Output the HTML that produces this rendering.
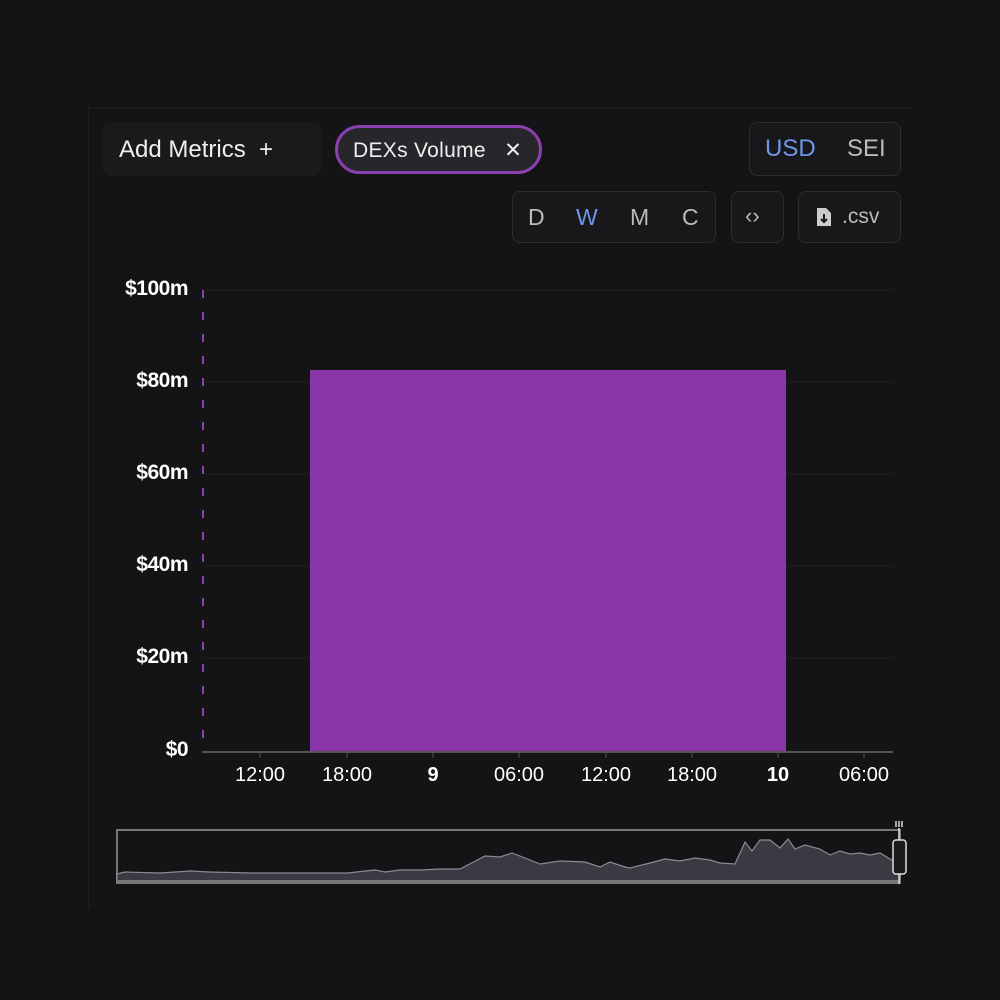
<!DOCTYPE html>
<html><head><style>
body{margin:0;width:1000px;height:1000px;background:#131316;font-family:"Liberation Sans",sans-serif;position:relative;overflow:hidden;color:#e8e8ea}
.panel{position:absolute;left:88px;top:107px;width:822px;height:800px;background:#141417;border-top:1px solid #1f1f23;border-left:1px solid #1f1f23}
.b{position:absolute;box-sizing:border-box}
.box{border:1px solid #2c2c31;border-radius:8px;background:#18181b}
.t{position:absolute;white-space:nowrap}
.yl{position:absolute;font-size:21px;font-weight:bold;color:#fff;text-align:right;letter-spacing:-0.5px}
.xl{position:absolute;top:764px;font-size:20px;color:#fff;transform:translateX(-50%)}
</style></head><body>
<div class="panel"></div>
<div class="b" style="left:102px;top:122px;width:220px;height:54px;background:#1a1a1d;border-radius:10px"></div>
<div class="t" style="left:119px;top:136px;font-size:24px;color:#eee">Add Metrics&nbsp;&nbsp;+</div>
<div class="b" style="left:335px;top:125px;width:207px;height:49px;border:3px solid #8b3fb0;border-radius:25px;background:#27272b"></div>
<div class="t" style="left:353px;top:138px;font-size:21px;color:#eee;letter-spacing:0.3px">DEXs Volume&nbsp;&nbsp;&nbsp;✕</div>
<div class="b box" style="left:749px;top:122px;width:152px;height:54px"></div>
<div class="t" style="left:765px;top:135px;font-size:24px;color:#6e97ea">USD</div>
<div class="t" style="left:847px;top:135px;font-size:24px;color:#bbb">SEI</div>
<div class="b box" style="left:512px;top:191px;width:204px;height:52px"></div>
<div class="t" style="left:528px;top:204px;font-size:23px;color:#bbb">D</div>
<div class="t" style="left:576px;top:204px;font-size:23px;color:#6e97ea">W</div>
<div class="t" style="left:630px;top:204px;font-size:23px;color:#bbb">M</div>
<div class="t" style="left:682px;top:204px;font-size:23px;color:#bbb">C</div>
<div class="b box" style="left:731px;top:191px;width:53px;height:52px"></div>
<div class="t" style="left:745px;top:203px;font-size:22px;color:#bbb">‹›</div>
<div class="b box" style="left:798px;top:191px;width:103px;height:52px"></div>
<svg class="b" style="left:815px;top:206px" width="18" height="22" viewBox="0 0 18 22"><path d="M2 2h9l5 5v13H2z" fill="#ccc"/><path d="M9 8v8M6 13l3 3 3-3" stroke="#18181b" stroke-width="2" fill="none"/></svg>
<div class="t" style="left:842px;top:205px;font-size:21px;color:#bbb">.csv</div>
<svg class="b" style="left:0;top:0" width="1000" height="1000">
<g stroke="#1f1f23" stroke-width="1">
<line x1="202" y1="290" x2="893" y2="290"/><line x1="202" y1="382" x2="893" y2="382"/><line x1="202" y1="474" x2="893" y2="474"/><line x1="202" y1="566" x2="893" y2="566"/><line x1="202" y1="658" x2="893" y2="658"/></g>
<line x1="203" y1="290" x2="203" y2="750" stroke="#8b3fb0" stroke-width="2" stroke-dasharray="8,14"/>
<rect x="310" y="370" width="476" height="382" fill="#8a35a8"/>
<line x1="202" y1="752" x2="893" y2="752" stroke="#555" stroke-width="2"/>
<g stroke="#555"><line x1="260" y1="752" x2="260" y2="758"/><line x1="347" y1="752" x2="347" y2="758"/><line x1="433" y1="752" x2="433" y2="758"/><line x1="519" y1="752" x2="519" y2="758"/><line x1="606" y1="752" x2="606" y2="758"/><line x1="692" y1="752" x2="692" y2="758"/><line x1="778" y1="752" x2="778" y2="758"/><line x1="864" y1="752" x2="864" y2="758"/></g>
<rect x="117" y="830" width="783" height="53" fill="none" stroke="#777" stroke-width="2"/>
<path d="M117 874L125 872L160 873L190 871L210 872L250 873L300 873L348 873L365 871L375 870L385 872L400 870L420 870L440 869L460 869L485 856L500 857L512 853L525 858L540 864L560 861L585 862L600 867L610 862L625 867L630 868L650 863L665 859L680 861L695 858L710 860L720 863L735 864L745 842L752 851L760 840L770 840L780 848L788 839L795 849L805 845L820 849L830 855L840 851L850 854L860 853L870 855L880 853L895 862L900 862V881H117Z" fill="#3a3b42" stroke="#8a8b92" stroke-width="1.2"/>
<line x1="117" y1="881" x2="900" y2="881" stroke="#777" stroke-width="2"/>
<line x1="899" y1="828" x2="899" y2="884" stroke="#ddd" stroke-width="1.5"/>
<rect x="893" y="840" width="13" height="34" rx="3" fill="#1a1a1d" stroke="#ddd" stroke-width="1.5"/>
<g stroke="#ddd" stroke-width="1.5"><line x1="896" y1="821" x2="896" y2="827"/><line x1="899" y1="821" x2="899" y2="827"/><line x1="902" y1="821" x2="902" y2="827"/></g>
</svg>
<div class="yl" style="top:277px;left:0;width:188px">$100m</div>
<div class="yl" style="top:369px;left:0;width:188px">$80m</div>
<div class="yl" style="top:461px;left:0;width:188px">$60m</div>
<div class="yl" style="top:553px;left:0;width:188px">$40m</div>
<div class="yl" style="top:645px;left:0;width:188px">$20m</div>
<div class="yl" style="top:738px;left:0;width:188px">$0</div>
<div class="xl" style="left:260px">12:00</div>
<div class="xl" style="left:347px">18:00</div>
<div class="xl" style="left:433px;font-weight:bold">9</div>
<div class="xl" style="left:519px">06:00</div>
<div class="xl" style="left:606px">12:00</div>
<div class="xl" style="left:692px">18:00</div>
<div class="xl" style="left:778px;font-weight:bold">10</div>
<div class="xl" style="left:864px">06:00</div>
</body></html>
